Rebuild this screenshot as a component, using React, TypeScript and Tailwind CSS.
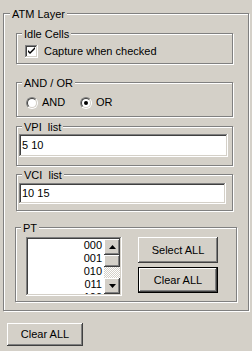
import type { ReactNode } from 'react';

const raised =
  'bg-[#d4d0c8] shadow-[inset_-1px_-1px_0_#404040,inset_1px_1px_0_#fff,inset_-2px_-2px_0_#808080,inset_2px_2px_0_#d4d0c8]';
const sunken =
  'bg-white shadow-[inset_-1px_-1px_0_#fff,inset_1px_1px_0_#808080,inset_-2px_-2px_0_#d4d0c8,inset_2px_2px_0_#404040]';

/** Etched group box with its caption sitting on the top line. */
function Group({
  title,
  className,
  legend = 'left-[5px]',
  children,
}: {
  title: string;
  className: string;
  legend?: string;
  children?: ReactNode;
}) {
  return (
    <div
      className={`relative shrink-0 border border-[#808080] shadow-[1px_1px_0_#fff,inset_1px_1px_0_#fff] ${className}`}
    >
      <span className={`absolute top-[-6px] ${legend} bg-[#d4d0c8] px-[2px] leading-[13px] whitespace-pre`}>
        {title}
      </span>
      {children}
    </div>
  );
}

function Checkbox() {
  return (
    <div className={`w-[13px] h-[13px] shrink-0 ${sunken}`}>
      <svg width="13" height="13" viewBox="0 0 13 13">
        <path d="M3 5v2l2 2 5-5V2L5 7z" fill="#000" />
      </svg>
    </div>
  );
}

function Radio({ on, label }: { on?: boolean; label: string }) {
  return (
    <label className="flex items-center gap-[4px] w-[54px]">
      <span className="relative w-[12px] h-[12px] shrink-0 rounded-full border border-[#808080] border-r-white border-b-white">
        <span className="absolute inset-0 rounded-full border border-[#404040] border-r-[#d4d0c8] border-b-[#d4d0c8] bg-white flex items-center justify-center">
          {on && <span className="w-[4px] h-[4px] rounded-full bg-black" />}
        </span>
      </span>
      <span>{label}</span>
    </label>
  );
}

function Arrow({ up }: { up?: boolean }) {
  return (
    <div className={`w-[16px] h-[16px] flex items-center justify-center ${raised}`}>
      <svg width="7" height="4" viewBox="0 0 7 4">
        <path d={up ? 'M3.5 0L7 4H0z' : 'M0 0h7L3.5 4z'} fill="#000" />
      </svg>
    </div>
  );
}

export default function App() {
  const pts = ['000', '001', '010', '011', '100'];

  return (
    <div className="w-[252px] h-[351px] bg-[#d4d0c8] pl-[3px] pt-[13px] font-['Liberation_Sans',Arial,sans-serif] text-[11px] leading-[13px] text-black overflow-hidden">
      <Group title="ATM Layer" legend="left-[6px]" className="w-[246px] h-[298px] pl-[12px] pt-[19px] flex flex-col">
        <Group title="Idle Cells" className="w-[217px] h-[31px] pl-[8px] pt-[11px]">
          <label className="flex items-center gap-[6px]">
            <Checkbox />
            <span>Capture when checked</span>
          </label>
        </Group>

        <Group title="AND / OR" className="mt-[18px] w-[217px] h-[35px] pl-[9px] pt-[13px]">
          <div className="flex">
            <Radio label="AND" />
            <Radio on label="OR" />
          </div>
        </Group>

        <Group title={'VPI  list'} className="mt-[9px] w-[217px] h-[40px] pl-[2px] pt-[7px]">
          <div className={`w-[209px] h-[23px] pl-[3px] flex items-center ${sunken}`}>5 10</div>
        </Group>

        <Group title={'VCI  list'} className="mt-[8px] w-[217px] h-[37px] pl-[2px] pt-[8px]">
          <div className={`w-[207px] h-[21px] pl-[3px] flex items-center ${sunken}`}>10 15</div>
        </Group>

        <Group title="PT" className="mt-[16px] -ml-[1px] w-[222px] h-[75px] pl-[10px] pt-[9px] flex">
          <div className={`w-[96px] h-[59px] p-[2px] flex ${sunken}`}>
            <div className="flex-1 overflow-hidden pr-[2px] text-right">
              {pts.map((p) => (
                <div key={p} className="h-[13px] leading-[13px]">
                  {p}
                </div>
              ))}
            </div>
            <div className="w-[16px] flex flex-col">
              <Arrow up />
              <div className={`h-[12px] ${raised}`} />
              <div className="flex-1 bg-[repeating-conic-gradient(#fff_0_25%,#d4d0c8_0_50%)] bg-[length:2px_2px]" />
              <Arrow />
            </div>
          </div>

          <div className="ml-[16px] flex flex-col gap-[4px]">
            <button className={`w-[80px] h-[26px] ${raised}`}>Select ALL</button>
            <button className="w-[80px] h-[26px] border border-black bg-[#d4d0c8] shadow-[inset_-1px_-1px_0_#404040,inset_1px_1px_0_#fff,inset_-2px_-2px_0_#808080]">
              Clear ALL
            </button>
          </div>
        </Group>
      </Group>

      <button className={`ml-[4px] mt-[12px] w-[76px] h-[23px] ${raised}`}>Clear ALL</button>
    </div>
  );
}
